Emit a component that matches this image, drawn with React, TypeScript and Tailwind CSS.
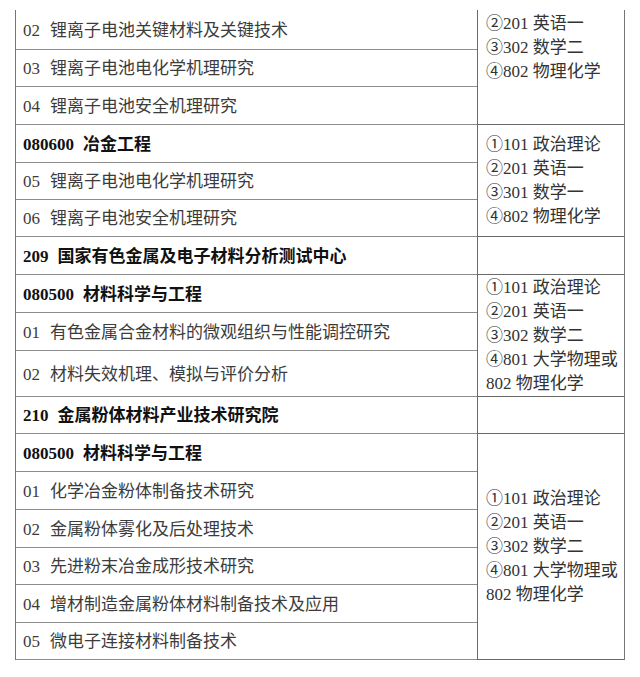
import * as React from "react";

type Row = { code: string; name: string; h: number; bold?: boolean };
type Group = { rows: Row[]; exam: string[]; top?: boolean };

const groups: Group[] = [
  {
    top: true,
    rows: [
      { code: "02", name: "锂离子电池关键材料及关键技术", h: 40 },
      { code: "03", name: "锂离子电池电化学机理研究", h: 37 },
      { code: "04", name: "锂离子电池安全机理研究", h: 38 },
    ],
    exam: ["②201 英语一", "③302 数学二", "④802 物理化学"],
  },
  {
    rows: [
      { code: "080600", name: "冶金工程", h: 38, bold: true },
      { code: "05", name: "锂离子电池电化学机理研究", h: 37 },
      { code: "06", name: "锂离子电池安全机理研究", h: 37 },
    ],
    exam: ["①101 政治理论", "②201 英语一", "③301 数学一", "④802 物理化学"],
  },
  {
    rows: [{ code: "209", name: "国家有色金属及电子材料分析测试中心", h: 38, bold: true }],
    exam: [],
  },
  {
    rows: [
      { code: "080500", name: "材料科学与工程", h: 38, bold: true },
      { code: "01", name: "有色金属合金材料的微观组织与性能调控研究", h: 38 },
      { code: "02", name: "材料失效机理、模拟与评价分析", h: 46 },
    ],
    exam: ["①101 政治理论", "②201 英语一", "③302 数学二", "④801 大学物理或", "802 物理化学"],
  },
  {
    rows: [{ code: "210", name: "金属粉体材料产业技术研究院", h: 37, bold: true }],
    exam: [],
  },
  {
    rows: [
      { code: "080500", name: "材料科学与工程", h: 38, bold: true },
      { code: "01", name: "化学冶金粉体制备技术研究", h: 38 },
      { code: "02", name: "金属粉体雾化及后处理技术", h: 38 },
      { code: "03", name: "先进粉末冶金成形技术研究", h: 37 },
      { code: "04", name: "增材制造金属粉体材料制备技术及应用", h: 38 },
      { code: "05", name: "微电子连接材料制备技术", h: 37 },
    ],
    exam: ["①101 政治理论", "②201 英语一", "③302 数学二", "④801 大学物理或", "802 物理化学"],
  },
];

const font = {
  fontFamily: '"Liberation Serif", "Noto Sans CJK SC", serif',
};

export default function App() {
  return (
    <div className="min-h-[677px] w-[640px] bg-white pt-[10px] pl-[15px]" style={font}>
      <div className="w-[610px] border-x border-[#767676] text-[17px]">
        {groups.map((g, gi) => (
          <div key={gi} className="flex">
            <div className="w-[461px] flex flex-col">
              {g.rows.map((r, ri) => (
                <div
                  key={ri}
                  style={{ height: r.h }}
                  className={`flex items-center border-b border-[#8c8c8c] pl-[7px] pt-[2px] ${
                    r.bold ? "font-bold text-[#111]" : "text-[#3c3c3c]"
                  }`}
                >
                  <span>{r.code}</span>
                  <span className={r.bold ? "ml-[9px]" : "ml-[10px]"}>{r.name}</span>
                </div>
              ))}
            </div>
            <div
              className={`flex-1 flex flex-col border-l border-b border-[#6a6a6a] pl-[8px] text-[#333] leading-[24px] ${
                g.top ? "justify-start pt-[2px]" : "justify-center"
              }`}
            >
              {g.exam.map((e, ei) => (
                <div key={ei} className="whitespace-nowrap">
                  {e}
                </div>
              ))}
            </div>
          </div>
        ))}
      </div>
    </div>
  );
}
